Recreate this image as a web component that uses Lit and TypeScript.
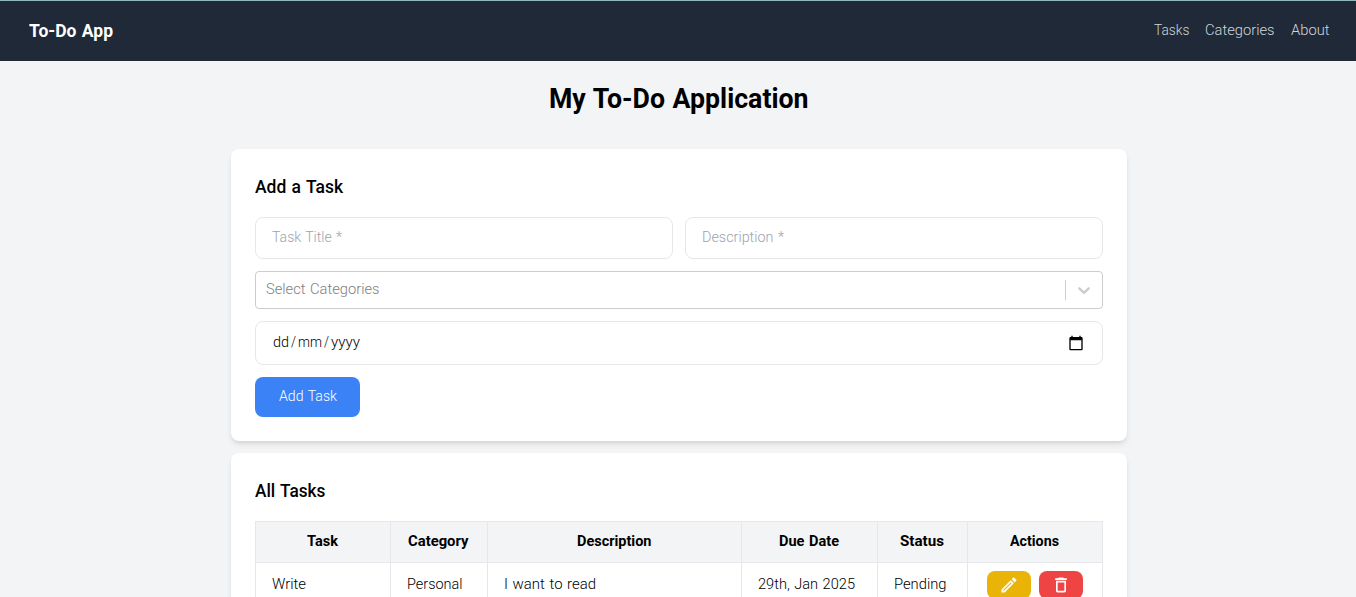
import { LitElement, html, css } from "lit";
import { customElement, property } from "lit/decorators.js";

/** A single line of text condensed to a given width. */
@customElement("fit-text")
class FitText extends LitElement {
  @property() text = "";
  @property({ type: Number }) width = 0;
  static styles = css`
    :host { display: inline-block; white-space: pre; text-align: left; }
    .outer { display: block; }
    .inner { display: inline-block; transform-origin: 0 50%; word-spacing: 1px; }
  `;
  firstUpdated() {
    this.fit();
    document.fonts?.ready.then(() => this.fit());
  }
  fit() {
    const inner = this.renderRoot.querySelector(".inner") as HTMLElement;
    inner.style.transform = "none";
    const natural = inner.getBoundingClientRect().width;
    if (natural) inner.style.transform = `scaleX(${this.width / natural})`;
  }
  render() {
    return html`<span class="outer" style="width:${this.width}px"><span class="inner">${this.text}</span></span>`;
  }
}

const t = (text: string, width: number) => html`<fit-text .text=${text} .width=${width}></fit-text>`;

@customElement("app-root")
class AppRoot extends LitElement {
  static styles = css`
    * { box-sizing: border-box; }
    :host {
      display: block;
      height: 597px;
      overflow: hidden;
      background: #f3f4f6;
      color: #000;
      font: 300 15px/24px Roboto, sans-serif;
    }
    nav {
      height: 61px;
      border-top: 1px solid #8fb8b8;
      background: #1f2937;
      display: flex;
      align-items: center;
      justify-content: space-between;
      padding: 0 27px 2px 28.5px;
    }
    .brand { color: #fff; font-size: 18px; line-height: 28px; font-weight: 700; padding-top: 2px; }
    .links { display: flex; gap: 16px; color: #d1d5db; }
    h1 { margin: 20px 0 32px; padding-left: 2px; font-size: 27.5px; line-height: 36px; font-weight: 700; text-align: center; }
    main { width: 896px; margin-left: 231px; display: flex; flex-direction: column; gap: 12px; }
    .card {
      background: #fff;
      border-radius: 8px;
      padding: 24px;
      box-shadow: 0 4px 6px -1px rgba(0,0,0,.1), 0 2px 4px -2px rgba(0,0,0,.1);
    }
    h2 { margin: 0 0 16px; font-size: 18px; line-height: 28px; font-weight: 500; height: 28px; }
    form { display: flex; flex-direction: column; gap: 12px; }
    .pair { display: grid; grid-template-columns: 1fr 1fr; gap: 12px; }
    .field {
      height: 42px;
      border: 1px solid #e5e7eb;
      border-radius: 8px;
      padding: 7px 16px;
      color: #9ca3af;
    }
    .select {
      height: 38px;
      border: 1px solid #ccc;
      border-radius: 4px;
      padding: 0 8px 0 10px;
      display: flex;
      align-items: center;
      color: #808080;
    }
    .select .label, .date .label { flex: 1; padding-bottom: 2px; }
    .sep { width: 1px; height: 20px; background: #ccc; margin-right: 8px; }
    .chev { display: block; fill: #ccc; }
    .date {
      height: 44px;
      color: #000;
      display: flex;
      align-items: center;
      padding: 0 18px 0 17px;
    }
    .date .label { display: flex; gap: 2px; }
    svg { display: block; }
    .add {
      align-self: flex-start;
      width: 105px;
      height: 40px;
      border: 0;
      border-radius: 8px;
      background: #3b82f6;
      color: #fff;
      font: inherit;
      padding: 7px 22px 9px 24px;
      text-align: left;
    }
    .table { border-left: 1px solid #e5e7eb; border-top: 1px solid #e5e7eb; }
    .row { display: grid; grid-template-columns: 135px 97px 254px 136px 90px 135px; }
    .cell {
      border-right: 1px solid #e5e7eb;
      border-bottom: 1px solid #e5e7eb;
      padding: 8px 16px;
      display: flex;
      align-items: center;
      height: 45px;
    }
    .head .cell {
      background: #f3f4f6;
      justify-content: center;
      height: 41px;
      padding: 6px 1px 9px 0;
      font-weight: 700;
    }
    .body .cell { padding-top: 6px; padding-bottom: 9px; }
    .body .actions { padding-top: 8px; justify-content: center; gap: 8px; }
    .btn { width: 44px; height: 28px; border-radius: 8px; padding: 4px 12px; fill: #fff; }
    .edit { background: #eab308; }
    .del { background: #ef4444; }
  `;

  render() {
    const heads: [string, number][] = [
      ["Task", 31], ["Category", 60.5], ["Description", 74.5],
      ["Due Date", 60], ["Status", 44], ["Actions", 49],
    ];
    const cells: [string, number][] = [
      ["Write", 34], ["Personal", 55.5], ["I want to read", 92],
      ["29th, Jan 2025", 97], ["Pending", 52.5],
    ];
    return html`
      <nav>
        <div class="brand">${t("To-Do App", 84)}</div>
        <div class="links">${t("Tasks", 35.5)}${t("Categories", 69.5)}${t("About", 38.5)}</div>
      </nav>
      <h1>${t("My To-Do Application", 259.5)}</h1>
      <main>
        <section class="card">
          <h2>${t("Add a Task", 88)}</h2>
          <form>
            <div class="pair">
              <div class="field">${t("Task Title *", 70)}</div>
              <div class="field">${t("Description *", 82)}</div>
            </div>
            <div class="select">
              <span class="label">${t("Select Categories", 113.5)}</span>
              <span class="sep"></span>
              <svg class="chev" width="20" height="20" viewBox="0 0 20 20"><path d="M4.516 7.548c0.436-0.446 1.043-0.481 1.576 0l3.908 3.747 3.908-3.747c0.533-0.481 1.141-0.446 1.574 0 0.436 0.445 0.408 1.197 0 1.615-0.406 0.418-4.695 4.502-4.695 4.502-0.217 0.223-0.502 0.335-0.787 0.335s-0.57-0.112-0.789-0.335c0 0-4.287-4.084-4.695-4.502s-0.436-1.17 0-1.615z"></path></svg>
            </div>
            <div class="field date">
              <span class="label">${t("dd", 16)}${t("/", 5)}${t("mm", 24)}${t("/", 5)}${t("yyyy", 29)}</span>
              <svg width="16" height="16" viewBox="0 0 24 24"><path d="M20 3h-1V1h-2v2H7V1H5v2H4c-1.1 0-2 .9-2 2v16c0 1.1.9 2 2 2h16c1.1 0 2-.9 2-2V5c0-1.1-.9-2-2-2zm0 18H4V8h16v13z"></path></svg>
            </div>
            <button class="add" type="button">${t("Add Task", 58)}</button>
          </form>
        </section>
        <section class="card">
          <h2>${t("All Tasks", 70.5)}</h2>
          <div class="table">
            <div class="row head">${heads.map(([s, w]) => html`<div class="cell">${t(s, w)}</div>`)}</div>
            <div class="row body">
              ${cells.map(([s, w]) => html`<div class="cell">${t(s, w)}</div>`)}
              <div class="cell actions">
                <span class="btn edit"><svg width="20" height="20" viewBox="0 0 24 24"><path d="M14.06 9.02l.92.92L5.92 19H5v-.92l9.06-9.06M17.66 3c-.25 0-.51.1-.7.29l-1.83 1.83 3.75 3.75 1.83-1.83c.39-.39.39-1.02 0-1.41l-2.34-2.34c-.2-.2-.45-.29-.71-.29zm-3.6 3.19L3 17.25V21h3.75L17.81 9.94l-3.75-3.75z"></path></svg></span>
                <span class="btn del"><svg width="20" height="20" viewBox="0 0 24 24"><path d="M16 9v10H8V9h8m-1.5-6h-5l-1 1H5v2h14V4h-3.5l-1-1zM18 7H6v12c0 1.1.9 2 2 2h8c1.1 0 2-.9 2-2V7z"></path></svg></span>
              </div>
            </div>
          </div>
        </section>
      </main>
    `;
  }
}
